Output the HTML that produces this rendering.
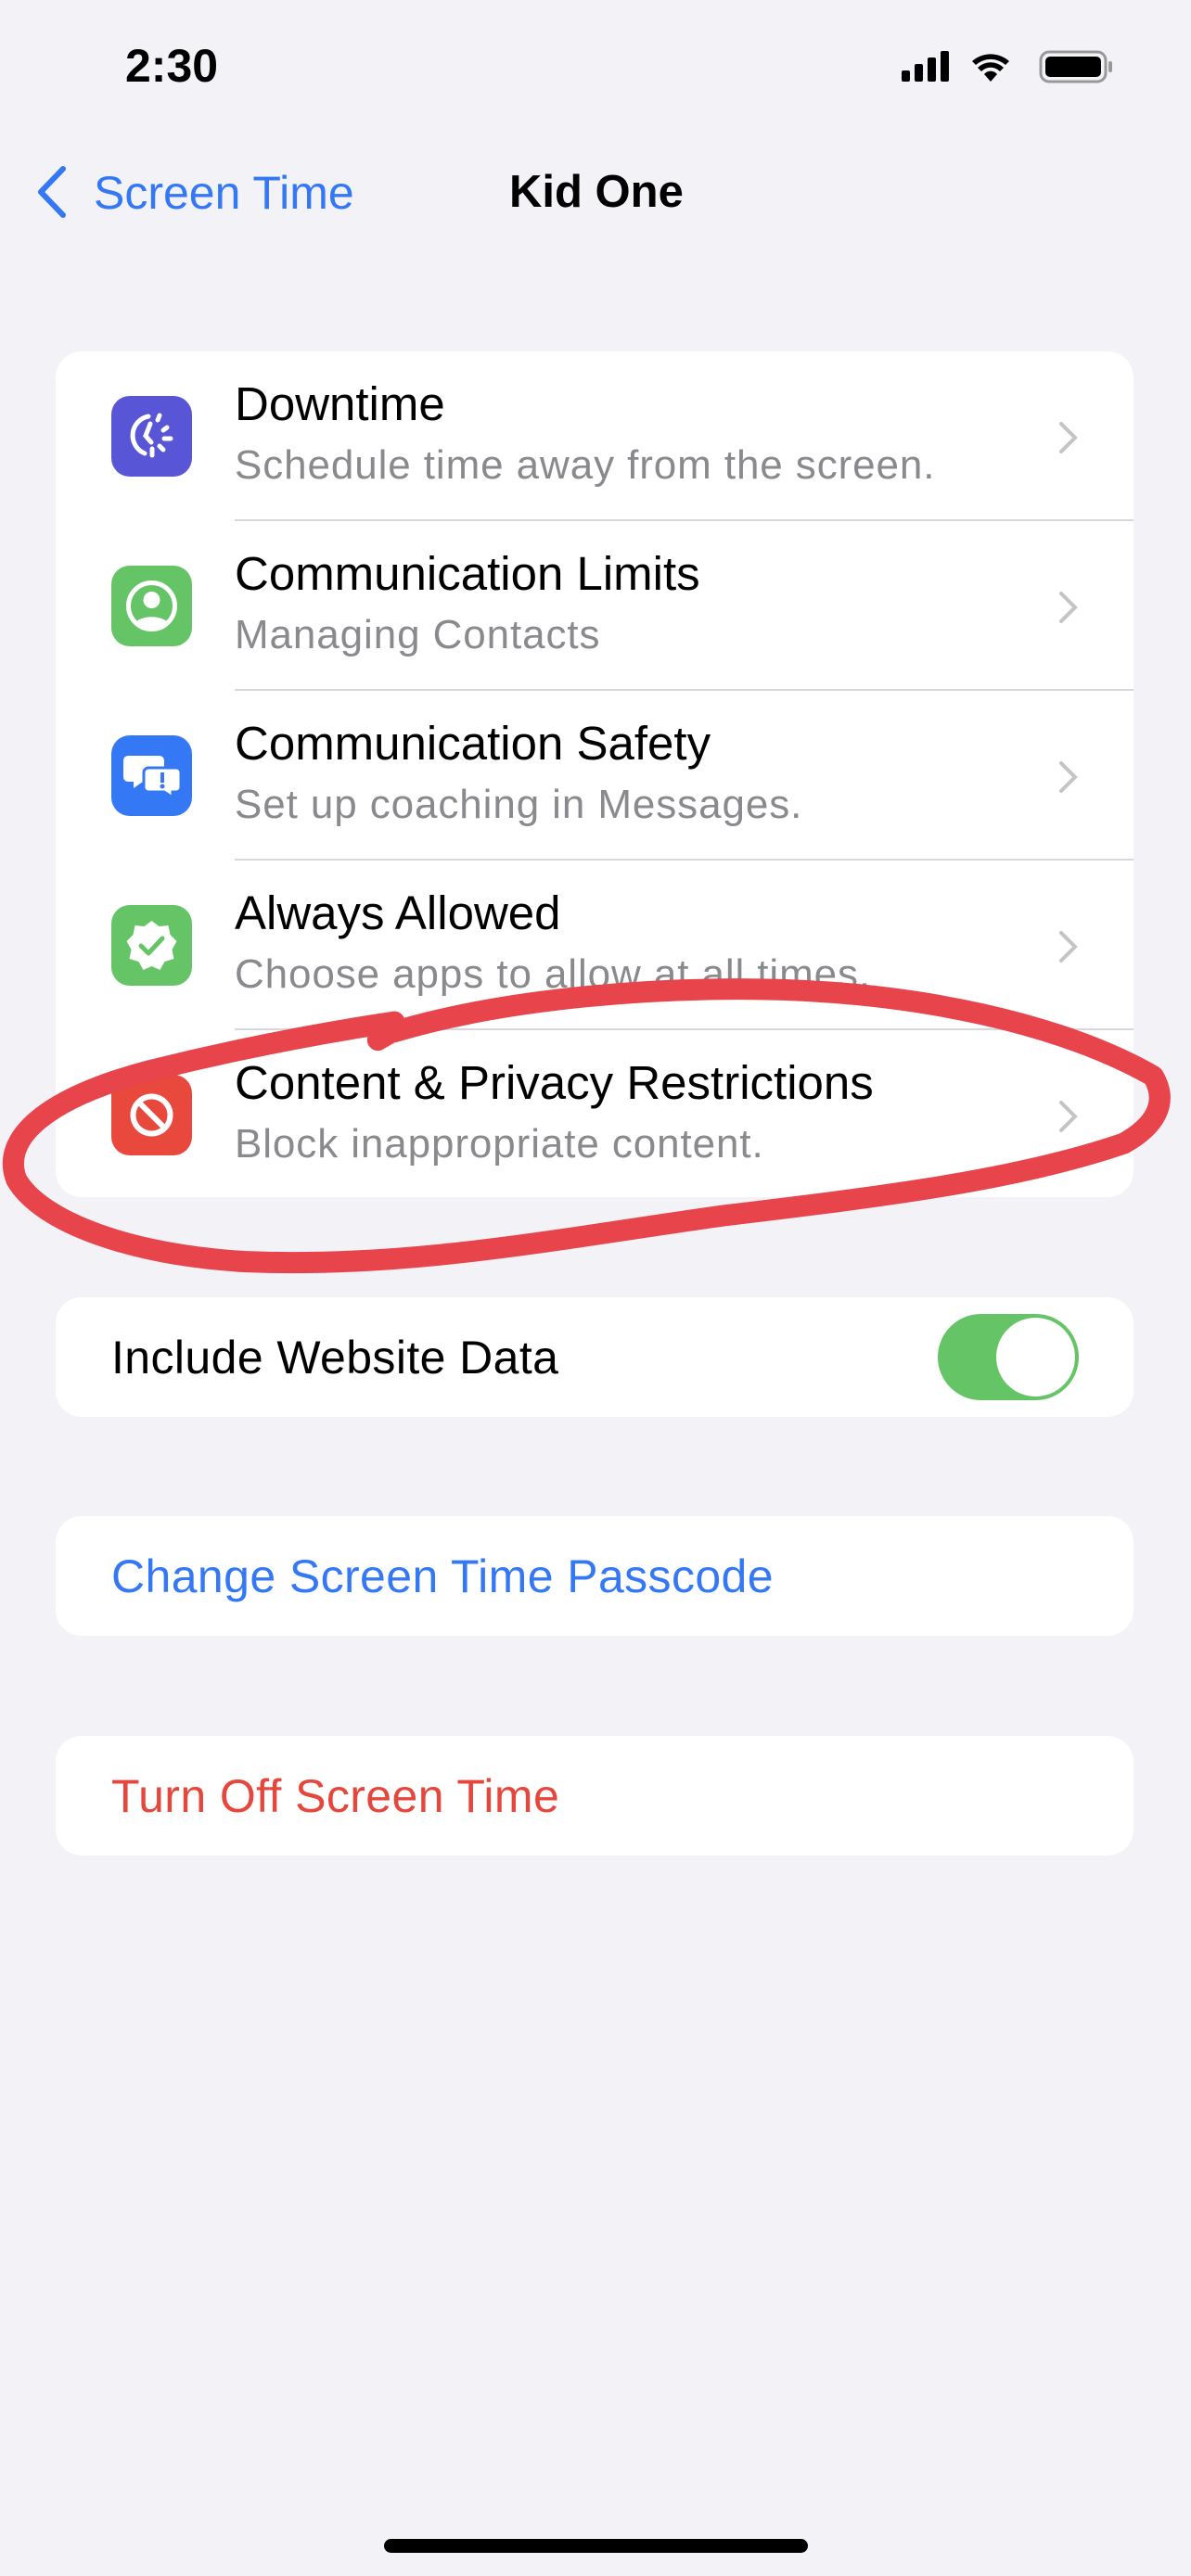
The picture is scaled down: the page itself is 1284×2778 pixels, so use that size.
<!DOCTYPE html>
<html><head><meta charset="utf-8"><style>
*{margin:0;padding:0;box-sizing:border-box}
body{width:1284px;height:2778px;background:#f2f2f7;font-family:"Liberation Sans",sans-serif;position:relative;overflow:hidden}
.abs{position:absolute}
.card{position:absolute;left:60px;width:1162px;background:#fff;border-radius:28px}
.row{position:absolute;left:0;width:1162px;height:183px}
.icon{position:absolute;left:60px;top:48px;width:87px;height:87px;border-radius:20px}
.t{position:absolute;left:193px;top:27px;font-size:51px;color:#000;white-space:nowrap}
.s{position:absolute;left:193px;top:98px;font-size:44px;letter-spacing:0.9px;color:#8a8a8e;white-space:nowrap}
.sep{position:absolute;left:193px;right:0;bottom:0;height:2px;background:#d8d8dc}
.chev{position:absolute;left:1080px;top:74px}
.lbl{position:absolute;left:60px;font-size:50px;letter-spacing:0.4px;white-space:nowrap}
</style></head><body>
<div class="abs" style="left:135px;top:42px;font-size:50px;font-weight:bold">2:30</div>
<svg class="abs" style="left:970px;top:52px" width="240" height="40" viewBox="0 0 240 40">
<rect x="2" y="24" width="9" height="12" rx="2"/><rect x="16" y="17" width="9" height="19" rx="2"/><rect x="30" y="10" width="9" height="26" rx="2"/><rect x="44" y="3" width="9" height="33" rx="2"/>
<path d="M78 14a30 30 0 0 1 40 0l-4 4a24 24 0 0 0-32 0z M84 21a20 20 0 0 1 28 0l-4 4a14 14 0 0 0-20 0z M91 28a9 9 0 0 1 14 0l-7 8z"/>
<rect x="152" y="4" width="70" height="32" rx="9" fill="none" stroke="#999" stroke-width="3"/><rect x="157" y="9" width="60" height="22" rx="5"/><rect x="225" y="14" width="4" height="12" rx="2" fill="#999"/></svg>
<svg class="abs" style="left:38px;top:178px" width="36" height="58"><path d="M30 4L6 29l24 25" fill="none" stroke="#3478f6" stroke-width="6" stroke-linecap="round" stroke-linejoin="round"/></svg>
<div class="abs" style="left:101px;top:179px;font-size:50px;color:#3478f6">Screen Time</div>
<div class="abs" style="left:549px;top:179px;font-size:49px;font-weight:bold">Kid One</div>

<div class="card" style="top:379px;height:912px">
<div class="row" style="top:0"><div class="icon" style="background:#5856d6"><svg width="87" height="87" viewBox="0 0 87 87" fill="none" stroke="#fff" stroke-width="5" stroke-linecap="round"><path d="M40 22A21 21 0 0 0 36 62"/><path d="M42 30l-5 13 6 7"/><path d="M44 57v7M52 54l4 4M57 46h7M56 37l4-3M50 26l2-5"/></svg></div><div class="t">Downtime</div><div class="s">Schedule time away from the screen.</div><div class="sep"></div><svg class="chev" width="24" height="38"><path d="M4 4l15 15L4 34" fill="none" stroke="#c4c4c7" stroke-width="4" stroke-linecap="round"/></svg></div>
<div class="row" style="top:183px"><div class="icon" style="background:#65c466"><svg width="87" height="87" viewBox="0 0 87 87"><circle cx="43.5" cy="43.5" r="25" fill="none" stroke="#fff" stroke-width="5"/><circle cx="43.5" cy="37" r="9" fill="#fff"/><path d="M27 60a22 14 0 0 1 33 0a25 25 0 0 1-33 0z" fill="#fff"/></svg></div><div class="t">Communication Limits</div><div class="s">Managing Contacts</div><div class="sep"></div><svg class="chev" width="24" height="38"><path d="M4 4l15 15L4 34" fill="none" stroke="#c4c4c7" stroke-width="4" stroke-linecap="round"/></svg></div>
<div class="row" style="top:366px"><div class="icon" style="background:#3478f6"><svg width="87" height="87" viewBox="0 0 87 87"><path d="M18 22h34a5 5 0 0 1 5 5v18a5 5 0 0 1-5 5H34l-10 7v-7h-6a5 5 0 0 1-5-5V27a5 5 0 0 1 5-5z" fill="#fff"/><path d="M40 35h30a5 5 0 0 1 5 5v16a5 5 0 0 1-5 5h-4v6l-9-6H40a5 5 0 0 1-5-5V40a5 5 0 0 1 5-5z" fill="#fff" stroke="#3478f6" stroke-width="3"/><rect x="53" y="40" width="4" height="11" fill="#3478f6"/><circle cx="55" cy="55" r="2.5" fill="#3478f6"/></svg></div><div class="t">Communication Safety</div><div class="s">Set up coaching in Messages.</div><div class="sep"></div><svg class="chev" width="24" height="38"><path d="M4 4l15 15L4 34" fill="none" stroke="#c4c4c7" stroke-width="4" stroke-linecap="round"/></svg></div>
<div class="row" style="top:549px"><div class="icon" style="background:#65c466"><svg width="87" height="87" viewBox="0 0 87 87"><path d="M43.5 17l8 6 10-1 2 10 7 7-5 9 2 10-10 3-5 9-9-4-9 4-5-9-10-3 2-10-5-9 7-7 2-10 10 1z" fill="#fff"/><path d="M32 44l8 8 15-16" fill="none" stroke="#65c466" stroke-width="5" stroke-linecap="round" stroke-linejoin="round"/></svg></div><div class="t">Always Allowed</div><div class="s">Choose apps to allow at all times.</div><div class="sep"></div><svg class="chev" width="24" height="38"><path d="M4 4l15 15L4 34" fill="none" stroke="#c4c4c7" stroke-width="4" stroke-linecap="round"/></svg></div>
<div class="row" style="top:732px"><div class="icon" style="background:#e9483d"><svg width="87" height="87" viewBox="0 0 87 87" fill="none" stroke="#fff" stroke-width="6"><circle cx="43.5" cy="43.5" r="20"/><path d="M30 30l27 27"/></svg></div><div class="t">Content &amp; Privacy Restrictions</div><div class="s">Block inappropriate content.</div><svg class="chev" width="24" height="38"><path d="M4 4l15 15L4 34" fill="none" stroke="#c4c4c7" stroke-width="4" stroke-linecap="round"/></svg></div>
</div>

<div class="card" style="top:1399px;height:129px"><div class="lbl" style="top:36px">Include Website Data</div>
<div class="abs" style="left:951px;top:18px;width:152px;height:93px;border-radius:47px;background:#65c466"><div class="abs" style="left:63px;top:4px;width:85px;height:85px;border-radius:50%;background:#fff"></div></div></div>
<div class="card" style="top:1635px;height:129px"><div class="lbl" style="top:36px;color:#3478f6">Change Screen Time Passcode</div></div>
<div class="card" style="top:1872px;height:129px"><div class="lbl" style="top:36px;color:#e5473c">Turn Off Screen Time</div></div>

<svg class="abs" style="left:0;top:0" width="1284" height="2778" viewBox="0 0 725 1568"><path d="M230 633l12-7M240 628C300 610 380 602 450 602C560 602 650 625 702 655C712 672 702 686 684 696C620 718 540 728 440 740C340 754 250 772 150 768C80 764 25 744 10 718C0 692 30 668 90 652C150 637 200 628 240 622" fill="none" stroke="#e8444b" stroke-width="13" stroke-linecap="round" stroke-linejoin="round"/></svg>

<div class="abs" style="left:414px;top:2738px;width:457px;height:15px;border-radius:8px;background:#000"></div>
</body></html>
